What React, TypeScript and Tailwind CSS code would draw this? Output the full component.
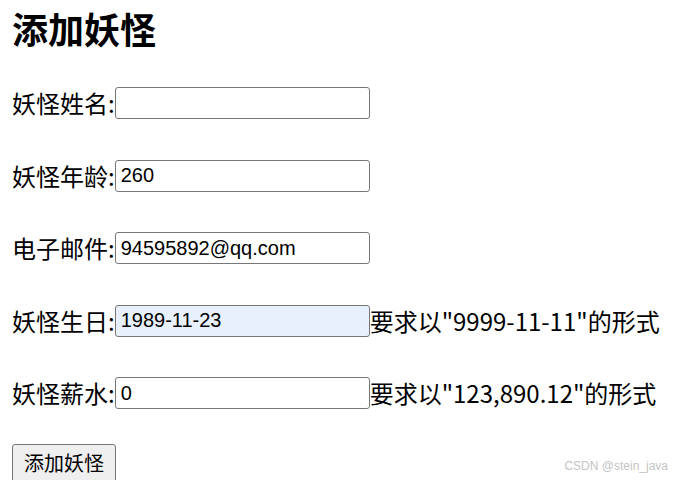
const FIELDS = [
  { label: "妖怪姓名:", value: "", hint: "" },
  { label: "妖怪年龄:", value: "260", hint: "" },
  { label: "电子邮件:", value: "94595892@qq.com", hint: "" },
  { label: "妖怪生日:", value: "1989-11-23", hint: '要求以"9999-11-11"的形式', autofill: true },
  { label: "妖怪薪水:", value: "0", hint: '要求以"123,890.12"的形式' },
];

export default function App() {
  return (
    <div className="relative min-h-[480px] bg-white px-3 text-black font-['Noto_Sans_CJK_SC',sans-serif]">
      <h1 className="pt-[8px] text-[36px] font-bold leading-[40px]">添加妖怪</h1>

      {/* form rows */}
      <div className="mt-[39px] flex flex-col gap-[40.5px]">
        {FIELDS.map((f) => (
          <div key={f.label} className="flex h-8 items-center">
            <span className="text-[24px] leading-none">{f.label}</span>
            <input
              type="text"
              defaultValue={f.value}
              className={`h-8 w-[255px] rounded-[3px] border border-[#767676] px-[5px] text-[20px] font-['Liberation_Sans',Arial,sans-serif] outline-none ${
                f.autofill ? "bg-[#e8f0fe]" : "bg-white"
              }`}
            />
            {f.hint && <span className="text-[24px] leading-none">{f.hint}</span>}
          </div>
        ))}
      </div>

      <button className="mt-[35px] h-[38px] rounded-[3px] border border-[#767676] bg-[#efefef] px-[11px] text-[20px] leading-none">
        添加妖怪
      </button>

      <div className="absolute bottom-[7px] right-[7px] text-[12px] text-[#c4c4c4] font-['Liberation_Sans',sans-serif]">
        CSDN @stein_java
      </div>
    </div>
  );
}
